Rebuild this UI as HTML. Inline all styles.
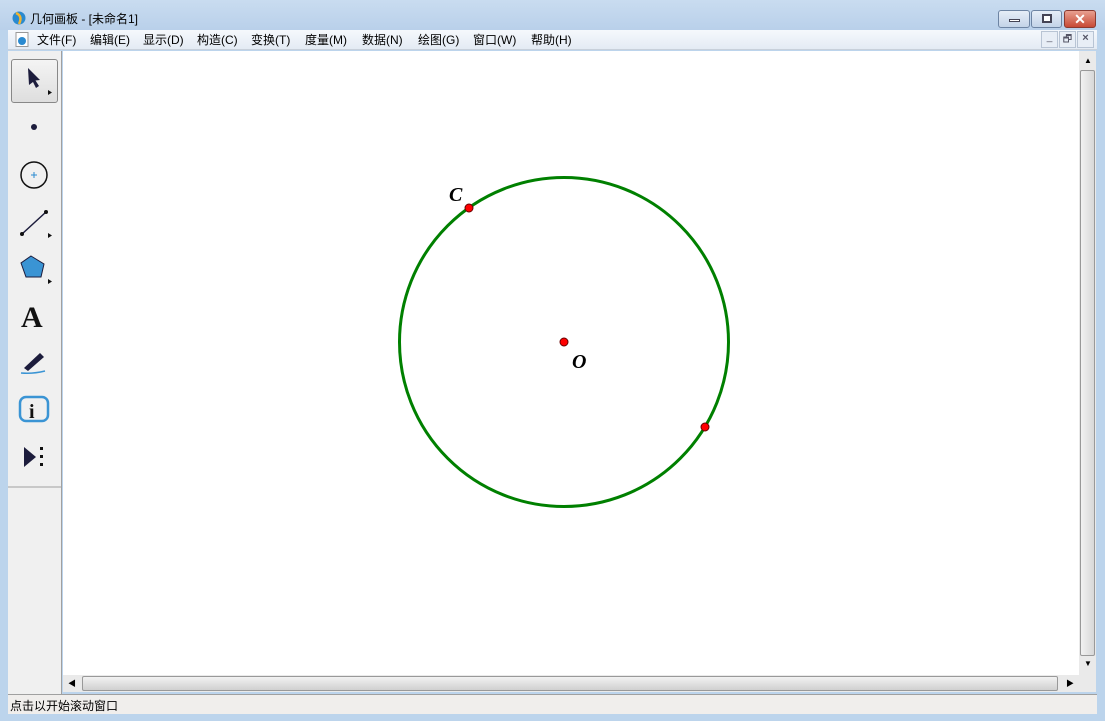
<!DOCTYPE html>
<html><head><meta charset="utf-8"><style>
*{margin:0;padding:0;box-sizing:border-box}
body{width:1105px;height:721px;overflow:hidden;background:#bcd4ec;font-family:"Liberation Sans","Noto Sans CJK SC",sans-serif;font-size:12px;position:relative}
.abs{position:absolute}
.title{left:0;top:0;width:1105px;height:30px;background:linear-gradient(#c9dcf0,#b9d0ea)}
.menu{left:8px;top:30px;width:1089px;height:20px;background:linear-gradient(#f5f8fc,#e4ebf4);border-bottom:1px solid #c8d0da}
.menu span{position:absolute;top:1px;font-size:12px;color:#000}
.tool{left:8px;top:51px;width:54px;height:643px;background:#f0f0f0;border-right:1px solid #a0a0a0}
.canvas{left:63px;top:51px;width:1016px;height:624px;background:#fff}
.vs{left:1079px;top:51px;width:17px;height:624px;background:#eaeaea}
.hs{left:63px;top:675px;width:1016px;height:17px;background:#eaeaea}
.status{left:8px;top:694px;width:1089px;height:20px;background:#f0eeec;border-top:1px solid #a0a0a0}
.btn{top:10px;height:18px;border:1px solid #6d84a3;border-radius:3px;background:linear-gradient(#e6eef8,#c3d3e8)}
</style></head><body>
<div class="abs title"></div>
<svg class="abs" style="left:11px;top:10px" width="16" height="16"><circle cx="8" cy="8" r="6.5" fill="#2a8ad0"/><path d="M5 3 Q12 6 8 14" stroke="#f3b530" stroke-width="2.5" fill="none"/></svg>
<div class="abs" style="left:30px;top:10px;font-size:12px">几何画板 - [未命名1]</div>
<div class="abs btn" style="left:998px;width:32px"><div class="abs" style="left:10px;top:8px;width:11px;height:3px;background:#fff;border:1px solid #445"></div></div>
<div class="abs btn" style="left:1031px;width:31px"><div class="abs" style="left:10px;top:3px;width:10px;height:9px;border:2px solid #445;background:#fff"></div></div>
<div class="abs btn" style="left:1064px;width:32px;background:linear-gradient(#e8a090,#c84a36);border-color:#8a3a30;color:#fff;text-align:center;font-weight:bold;font-size:14px;line-height:16px">✕</div>
<div class="abs menu">
<svg class="abs" style="left:7px;top:2px" width="14" height="15"><rect x="1" y="0.5" width="12" height="14" fill="#fff" stroke="#999"/><circle cx="7" cy="9" r="4" fill="#2a8ad0"/></svg>
<span style="left:29px">文件(F)</span><span style="left:82px">编辑(E)</span><span style="left:135px">显示(D)</span><span style="left:189px">构造(C)</span><span style="left:243px">变换(T)</span><span style="left:297px">度量(M)</span><span style="left:354px">数据(N)</span><span style="left:410px">绘图(G)</span><span style="left:465px">窗口(W)</span><span style="left:523px">帮助(H)</span>
<div class="abs" style="left:1033px;top:1px;width:17px;height:17px;border:1px solid #b8c4d4;background:#e8eef6;font-size:10px;text-align:center;color:#556">_</div>
<div class="abs" style="left:1051px;top:1px;width:17px;height:17px;border:1px solid #b8c4d4;background:#e8eef6;font-size:10px;text-align:center;color:#556">🗗</div>
<div class="abs" style="left:1069px;top:1px;width:17px;height:17px;border:1px solid #b8c4d4;background:#e8eef6;font-size:11px;text-align:center;color:#556;font-weight:bold">×</div>
</div>
<div class="abs tool">
<div class="abs" style="left:3px;top:8px;width:47px;height:44px;border:1px solid #888;border-radius:3px;background:linear-gradient(#f4f4f4,#dedede)"></div>
<svg class="abs" style="left:0;top:0" width="54" height="440">
<path d="M20 17 L32 29 L27.5 29.5 L31 35 L28 37 L25 31 L21 34Z" fill="#1c1c3c"/>
<path d="M40 39 L44 41.5 L40 44Z" fill="#111"/>
<circle cx="26" cy="76" r="3" fill="#1c1c3c"/>
<circle cx="26" cy="124" r="13" fill="none" stroke="#111" stroke-width="1.5"/>
<path d="M23 124h6M26 121v6" stroke="#2a8ad0"/>
<path d="M14 183 L38 161" stroke="#1c1c3c" stroke-width="1.5"/><circle cx="14" cy="183" r="2" fill="#111"/><circle cx="38" cy="161" r="2" fill="#111"/>
<path d="M40 182 L44 184.5 L40 187Z" fill="#111"/>
<path d="M23 205 L36 213 L33 226 L18 226 L13 212Z" fill="#3a94d4" stroke="#1c1c3c"/>
<path d="M40 228 L44 230.5 L40 233Z" fill="#111"/>
<text x="13" y="276" font-family="Liberation Serif" font-weight="bold" font-size="30" fill="#111">A</text>
<path d="M16 317 L32 302 L36 306 L20 320Z" fill="#1c1c3c"/><path d="M13 322 Q25 323 37 320" stroke="#3a94d4" stroke-width="1.5" fill="none"/>
<rect x="12" y="346" width="28" height="24" rx="6" fill="none" stroke="#3a94d4" stroke-width="2.5"/>
<text x="21" y="367" font-family="Liberation Serif" font-weight="bold" font-size="20" fill="#111">i</text>
<path d="M16 396 L28 406 L16 416Z" fill="#1c1c3c"/><rect x="32" y="396" width="3" height="3" fill="#111"/><rect x="32" y="404" width="3" height="3" fill="#111"/><rect x="32" y="412" width="3" height="3" fill="#111"/>
<path d="M0 436 H54" stroke="#a0a0a0"/>
</svg>
</div>
<div class="abs canvas">
<svg width="1016" height="624">
<circle cx="501" cy="291" r="164.5" fill="none" stroke="#008000" stroke-width="3"/>
<circle cx="406" cy="157" r="4" fill="#f00" stroke="#600"/>
<circle cx="501" cy="291" r="4" fill="#f00" stroke="#600"/>
<circle cx="642" cy="376" r="4" fill="#f00" stroke="#600"/>
<text x="386" y="150" font-family="Liberation Serif" font-style="italic" font-weight="bold" font-size="20">C</text>
<text x="509" y="317" font-family="Liberation Serif" font-style="italic" font-weight="bold" font-size="20">O</text>
</svg>
</div>
<div class="abs vs">
<div class="abs" style="left:1px;top:19px;width:15px;height:586px;border:1px solid #999;border-radius:2px;background:linear-gradient(90deg,#f2f2f2,#d8d8d8)"></div>
<div class="abs" style="left:5px;top:5px;font-size:8px">▲</div><div class="abs" style="left:5px;top:608px;font-size:8px">▼</div>
</div>
<div class="abs hs">
<div class="abs" style="left:19px;top:1px;width:976px;height:15px;border:1px solid #999;border-radius:2px;background:linear-gradient(#f2f2f2,#d0d0d0)"></div>
<div class="abs" style="left:5px;top:3px;font-size:8px">◀</div><div class="abs" style="left:1003px;top:3px;font-size:8px">▶</div>
</div>
<div class="abs" style="left:1079px;top:675px;width:17px;height:17px;background:#eaeaea"></div>
<div class="abs status"><div class="abs" style="left:2px;top:2px;font-size:12px">点击以开始滚动窗口</div></div>
</body></html>
